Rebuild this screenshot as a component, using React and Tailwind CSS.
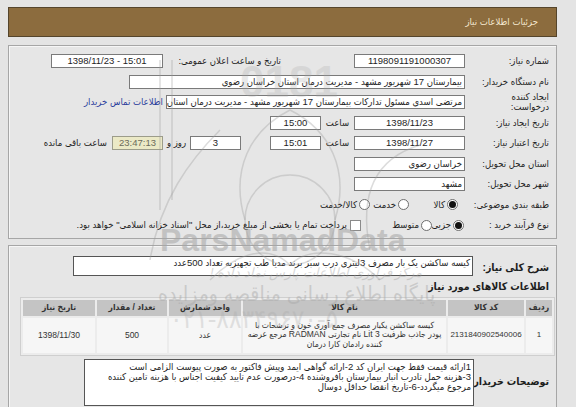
import React from 'react';

const Field = ({ w, align = 'center', ltr = false, className = '', children }) => (
  <div
    dir={ltr ? 'ltr' : undefined}
    className={`${w} h-[14px] shrink-0 bg-white border border-[#7a7a7a] px-[2px] leading-[12px] overflow-hidden whitespace-nowrap ${
      align === 'center' ? 'text-center' : 'text-right'
    } ${className}`}
  >
    {children}
  </div>
);

const Radio = ({ checked }) => (
  <span className="w-[11px] h-[11px] shrink-0 rounded-full border border-[#6e6e6e] bg-white flex items-center justify-center">
    {checked && <span className="w-[7px] h-[7px] rounded-full bg-[#111]" />}
  </span>
);

const Row = ({ label, children }) => (
  <div className="flex items-center h-[20.5px]">
    <div className="w-[84px] shrink-0 leading-[10px] whitespace-nowrap">{label}</div>
    {children}
  </div>
);

const COLS = 'grid grid-cols-[26px_76px_203px_72px_70px_72px] gap-[2px]';

const Watermark = () => (
  <div className="absolute inset-0 pointer-events-none">
    <svg className="absolute left-[120px] top-[50px]" width="340" height="240" viewBox="0 0 340 240" fill="none" stroke="#9a9a9a" strokeOpacity="0.35" strokeWidth="1.5">
      <path d="M30 210 C 40 150, 70 110, 100 80" />
      <path d="M40 10 V 160" />
      <path d="M52 10 V 150" />
      <circle cx="170" cy="170" r="45" />
      <path d="M125 170 C 110 120, 130 80, 170 60 C 210 80, 230 120, 215 170" />
      <path d="M250 200 C 240 150, 250 110, 300 95" />
      <path d="M90 230 C 120 200, 150 195, 170 215" />
      <path d="M170 215 C 190 195, 230 200, 260 230" />
    </svg>
    <div className="absolute left-[240px] top-[60px] text-[44px] font-bold font-['Liberation_Sans',sans-serif] text-[#a8a8a8] opacity-25 leading-none">0181</div>
    <div className="absolute left-[160px] top-[224px] text-[32px] font-bold font-['Liberation_Sans',sans-serif] text-[#a6a6a6] opacity-55 leading-none">ParsNamadData</div>
    <div dir="rtl" className="absolute left-[210px] top-[266px] text-[13px] italic text-[#a0a0a0] opacity-40 leading-none">مرکز فراوری اطلاعات پارس نماد داده !</div>
    <div dir="rtl" className="absolute left-[158px] top-[283px] text-[21px] text-[#a8a8a8] opacity-45 leading-none">پایگاه اطلاع رسانی مناقصه ومزایده</div>
    <div className="absolute left-[170px] top-[306px] text-[26px] text-[#a8a8a8] opacity-30 leading-none">۰۲۱-۸۸۳۴۹۶۷۰-۵</div>
  </div>
);

export default function App() {
  return (
    <div className="relative h-[407px] overflow-hidden bg-[#e4e4e4] font-['Liberation_Sans','DejaVu_Sans_Condensed','DejaVu_Sans',sans-serif] text-[9.5px] text-[#1e1e1e] pl-[8px] pt-[7px]">
      <div dir="rtl" className="w-[549px]">
        <div className="h-[30px] bg-[#8c6c3e] border border-[#55452c] flex items-center pr-[18px] text-[#f4e8d0] text-[9.5px]">
          جزئیات اطلاعات نیاز
        </div>

        <div className="mt-[8px] border border-[#a6a6a6] shadow-[inset_1px_1px_0_#f6f6f6] bg-[#e6e6e6] pr-[7px] pt-[5px] pb-[2px]">
          <Row label="شماره نیاز:">
            <Field w="w-[111px]" ltr>1198091191000307</Field>
            <div className="w-[118px] mr-[73px] shrink-0 whitespace-nowrap">تاریخ و ساعت اعلان عمومی:</div>
            <Field w="w-[112px]" ltr>1398/11/23 - 15:01</Field>
          </Row>
          <Row label="نام دستگاه خریدار:">
            <Field w="w-[336px]" align="right">بیمارستان 17 شهریور مشهد - مدیریت درمان استان خراسان رضوی</Field>
          </Row>
          <Row label={<>ایجاد کننده<br />درخواست:</>}>
            <Field w="w-[299px]" align="right">مرتضی اسدی مسئول تدارکات بیمارستان 17 شهریور مشهد - مدیریت درمان استان خراسان رضوی</Field>
            <span className="mr-[3px] text-[#2b3d9c] whitespace-nowrap">اطلاعات تماس خریدار</span>
          </Row>
          <Row label="تاریخ ایجاد نیاز:">
            <Field w="w-[111px]" ltr>1398/11/23</Field>
            <div className="w-[33px] shrink-0 text-center">ساعت</div>
            <Field w="w-[51px]" ltr>15:00</Field>
          </Row>
          <Row label="تاریخ اعتبار نیاز:">
            <Field w="w-[111px]" ltr>1398/11/27</Field>
            <div className="w-[33px] shrink-0 text-center">ساعت</div>
            <Field w="w-[51px]" ltr>15:01</Field>
            <Field w="w-[51px]" className="mr-[29px]">3</Field>
            <div className="w-[27px] shrink-0 text-center whitespace-nowrap">روز و</div>
            <Field w="w-[51px]" ltr className="!bg-[#ebe9c6] !border-[#9c9c8a] text-[#6b6b5a]">23:47:13</Field>
            <span className="mr-[5px] whitespace-nowrap">ساعت باقی مانده</span>
          </Row>
          <Row label="استان محل تحویل:">
            <Field w="w-[111px]" align="right">خراسان رضوی</Field>
          </Row>
          <Row label="شهر محل تحویل:">
            <Field w="w-[111px]" align="right">مشهد</Field>
          </Row>
          <Row label="طبقه بندی موضوعی:">
            <div className="flex items-center mr-[7px] whitespace-nowrap">
              <Radio checked />
              <span className="w-[38px] shrink-0 pr-[2px]">کالا</span>
              <Radio />
              <span className="w-[28px] shrink-0 pr-[2px]">خدمت</span>
              <Radio />
              <span className="pr-[2px]">کالا/خدمت</span>
            </div>
          </Row>
          <Row label="نوع فرآیند خرید :">
            <div className="flex items-center mr-[1px] whitespace-nowrap">
              <Radio checked />
              <span className="w-[21px] shrink-0 pr-[2px]">جزیی</span>
              <Radio />
              <span className="w-[60px] shrink-0 pr-[2px]">متوسط</span>
              <span className="w-[11px] h-[11px] border border-[#8a8a8a] bg-white shrink-0" />
              <span className="mr-[3px]">پرداخت تمام یا بخشی از مبلغ خرید،از محل "اسناد خزانه اسلامی" خواهد بود.</span>
            </div>
          </Row>
        </div>

        <div className="mt-[6px] h-[200px] border border-[#a6a6a6] shadow-[inset_1px_1px_0_#f6f6f6] bg-[#e6e6e6] pr-[7px] pt-[10px]">
          <div className="flex items-start">
            <div className="w-[76px] shrink-0 pt-[4px] font-bold text-[10.5px] whitespace-nowrap">شرح کلی نیاز:</div>
            <div className="w-[400px] h-[20px] bg-white border border-[#555] px-[2px] leading-[12px] text-right whitespace-nowrap overflow-hidden">
              کیسه ساکشن یک بار مصرف 3لیتری درب سبز برند مدیا طب تجهیزیه تعداد 500عدد
            </div>
          </div>
          <div className="mt-[3px] h-[14px] font-bold text-[10.5px] leading-[14px]">اطلاعات کالاهای مورد نیاز</div>
          <div className="mt-[4px] w-[535px] -mr-[6px] border border-[#cfcfcf] bg-[#ececec] p-[2px]">
            <div className={`${COLS} h-[16px] text-[8.5px] font-bold text-[#333]`}>
              {['ردیف', 'کد کالا', 'نام کالا', 'واحد شمارش', 'تعداد / مقدار', 'تاریخ نیاز'].map((h) => (
                <div key={h} className="bg-[#c4c4c4] flex items-center justify-center whitespace-nowrap">{h}</div>
              ))}
            </div>
            <div className={`${COLS} h-[35px] mt-[2px] text-[8px] text-[#333]`}>
              <div className="bg-[#f6f6f6] flex items-center justify-center">1</div>
              <div className="bg-[#f6f6f6] flex items-center justify-center">2131840902540006</div>
              <div className="bg-[#f6f6f6] flex flex-col items-center justify-center leading-[9.5px] whitespace-nowrap text-[8.5px]">
                <span>کیسه ساکشن یکبار مصرف جمع آوری خون و ترشحات با</span>
                <span>پودر جاذب ظرفیت 3 Lit نام تجارتی RADMAN مرجع عرضه</span>
                <span>کننده رادمان کارا درمان</span>
              </div>
              <div className="bg-[#f6f6f6] flex items-center justify-center text-[8.5px]">عدد</div>
              <div className="bg-[#f6f6f6] flex items-center justify-center text-[8.5px]">500</div>
              <div className="bg-[#f6f6f6] flex items-center justify-center text-[8.5px]" dir="ltr">1398/11/30</div>
            </div>
          </div>
          <div className="flex items-center mt-[3px]">
            <div className="w-[75px] shrink-0 font-bold text-[10.5px] whitespace-nowrap">توضیحات خریدار:</div>
            <div className="w-[390px] h-[47px] bg-white border border-[#555] px-[2px] pt-[2px] leading-[10px] text-right">
              <div className="whitespace-nowrap">1ارائه قیمت فقط جهت ایران کد 2-ارائه گواهی ایمد وپیش فاکتور به صورت پیوست الزامی است</div>
              <div className="whitespace-nowrap">3-هزینه حمل تادرب انبار بیمارستان بافروشنده 4-درصورت عدم تایید کیفیت  اجناس با هزینه تامین کننده</div>
              <div className="whitespace-nowrap">مرجوع میگردد-6-تاریخ انقضا حداقل دوسال</div>
            </div>
          </div>
        </div>
      </div>
      <Watermark />
    </div>
  );
}
